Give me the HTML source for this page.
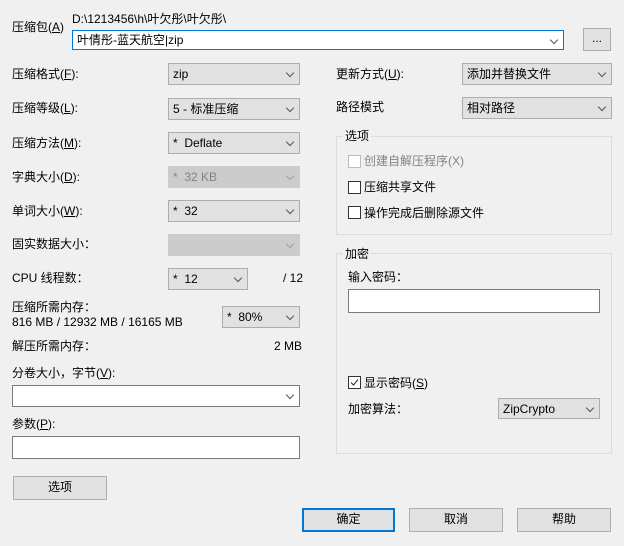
<!DOCTYPE html>
<html><head><meta charset="utf-8"><style>
body{margin:0;width:624px;height:546px;background:#f0f0f0;font-family:"Liberation Sans","Noto Sans CJK SC",sans-serif;font-size:12px;color:#000;position:relative;overflow:hidden}
.a{position:absolute;white-space:nowrap;line-height:14px}
.c{position:absolute;box-sizing:border-box;height:22px;border:1px solid #adadad;background:#e1e1e1;padding:3px 0 0 4px;line-height:14px;white-space:nowrap}
.c.d{background:#cccccc;border-color:#cccccc;color:#838383}
.c::after{content:"";position:absolute;right:6px;top:6px;width:5px;height:5px;border-right:1px solid #555;border-bottom:1px solid #555;transform:rotate(45deg)}
.c.d::after{border-color:#a0a0a0}
.nx::after{display:none}
.w{background:#fff;border-color:#7a7a7a}
.b{position:absolute;box-sizing:border-box;border:1px solid #adadad;background:#e1e1e1;text-align:center;line-height:21px}
.g{position:absolute;box-sizing:border-box;border:1px solid #dcdcdc}
.k{position:absolute;box-sizing:border-box;width:13px;height:13px;border:1px solid #333;background:#fff}
u{text-decoration:underline}
</style></head><body>
<div class="a" style="left:12px;top:20px">压缩包(<u>A</u>)</div>
<div class="a" style="left:72px;top:12px">D:\1213456\h\叶欠彤\叶欠彤\</div>
<div class="c w" style="left:72px;top:30px;width:492px;height:20px;border-color:#0078d7;padding-top:2px">叶倩彤-蓝天航空|zip</div>
<div class="b" style="left:583px;top:28px;width:28px;height:23px;line-height:18px">...</div>

<div class="a" style="left:12px;top:67px">压缩格式(<u>F</u>):</div>
<div class="c" style="left:168px;top:63px;width:132px">zip</div>
<div class="a" style="left:12px;top:101px">压缩等级(<u>L</u>):</div>
<div class="c" style="left:168px;top:98px;width:132px">5 - 标准压缩</div>
<div class="a" style="left:12px;top:136px">压缩方法(<u>M</u>):</div>
<div class="c" style="left:168px;top:132px;width:132px">* &nbsp;Deflate</div>
<div class="a" style="left:12px;top:170px">字典大小(<u>D</u>):</div>
<div class="c d" style="left:168px;top:166px;width:132px">* &nbsp;32 KB</div>
<div class="a" style="left:12px;top:204px">单词大小(<u>W</u>):</div>
<div class="c" style="left:168px;top:200px;width:132px">* &nbsp;32</div>
<div class="a" style="left:12px;top:237px">固实数据大小：</div>
<div class="c d" style="left:168px;top:234px;width:132px"></div>
<div class="a" style="left:12px;top:271px">CPU 线程数：</div>
<div class="c" style="left:168px;top:268px;width:80px">* &nbsp;12</div>
<div class="a" style="left:283px;top:271px">/ 12</div>
<div class="a" style="left:12px;top:300px">压缩所需内存：</div>
<div class="a" style="left:12px;top:315px">816 MB / 12932 MB / 16165 MB</div>
<div class="c" style="left:222px;top:306px;width:78px">* &nbsp;80%</div>
<div class="a" style="left:12px;top:339px">解压所需内存：</div>
<div class="a" style="left:274px;top:339px">2 MB</div>
<div class="a" style="left:12px;top:366px">分卷大小，字节(<u>V</u>):</div>
<div class="c w" style="left:12px;top:385px;width:288px"></div>
<div class="a" style="left:12px;top:417px">参数(<u>P</u>):</div>
<div class="c w nx" style="left:12px;top:436px;width:288px;height:23px"></div>
<div class="b" style="left:13px;top:476px;width:94px;height:24px">选项</div>

<div class="a" style="left:336px;top:67px">更新方式(<u>U</u>):</div>
<div class="c" style="left:462px;top:63px;width:150px">添加并替换文件</div>
<div class="a" style="left:336px;top:100px">路径模式</div>
<div class="c" style="left:462px;top:97px;width:150px">相对路径</div>

<div class="g" style="left:336px;top:136px;width:276px;height:99px"></div>
<div class="a" style="left:343px;top:129px;background:#f0f0f0;padding:0 2px">选项</div>
<div class="k" style="left:348px;top:155px;border-color:#bcbcbc"></div>
<div class="a" style="left:364px;top:154px;color:#838383">创建自解压程序(X)</div>
<div class="k" style="left:348px;top:181px"></div>
<div class="a" style="left:364px;top:180px">压缩共享文件</div>
<div class="k" style="left:348px;top:206px"></div>
<div class="a" style="left:364px;top:206px">操作完成后删除源文件</div>

<div class="g" style="left:336px;top:253px;width:276px;height:201px"></div>
<div class="a" style="left:343px;top:247px;background:#f0f0f0;padding:0 2px">加密</div>
<div class="a" style="left:348px;top:270px">输入密码：</div>
<div class="c w nx" style="left:348px;top:289px;width:252px;height:24px"></div>
<div class="k" style="left:348px;top:376px"><svg width="11" height="11" style="position:absolute;left:0;top:0"><path d="M2 5.5L4.5 8L9 2.5" stroke="#222" fill="none" stroke-width="1"/></svg></div>
<div class="a" style="left:364px;top:376px">显示密码(<u>S</u>)</div>
<div class="a" style="left:348px;top:402px">加密算法：</div>
<div class="c" style="left:498px;top:398px;width:102px;height:21px">ZipCrypto</div>

<div class="b" style="left:302px;top:508px;width:93px;height:24px;border:2px solid #0078d7;line-height:19px">确定</div>
<div class="b" style="left:409px;top:508px;width:94px;height:24px">取消</div>
<div class="b" style="left:517px;top:508px;width:94px;height:24px">帮助</div>
</body></html>
